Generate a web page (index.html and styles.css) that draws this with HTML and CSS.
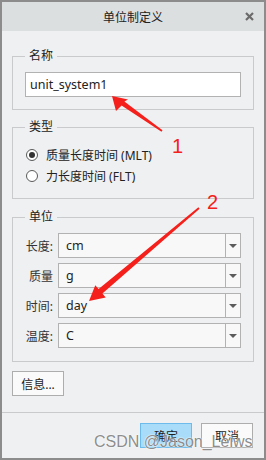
FILE: index.html
```html
<!DOCTYPE html>
<html lang="zh-CN">
<head>
  <meta charset="UTF-8">
  <meta name="viewport" content="width=device-width, initial-scale=1.0">
  <title>单位制定义</title>
  <link rel="stylesheet" href="styles.css">
</head>
<body>
  <div class="window">
    <div class="titlebar">
      <span></span>
      <span class="title">单位制定义</span>
      <span class="close">
        <svg width="9" height="9" viewBox="0 0 9 9">
          <path d="M1 1 L8 8 M8 1 L1 8" stroke="#6b6b6b" stroke-width="2.2" fill="none"/>
        </svg>
      </span>
    </div>

    <div class="content">
      <fieldset class="group name-group">
        <legend>名称</legend>
        <div class="textbox">unit_system1</div>
      </fieldset>

      <fieldset class="group type-group">
        <legend>类型</legend>
        <div class="radio-row"><span class="radio checked"></span>质量长度时间 (MLT)</div>
        <div class="radio-row"><span class="radio"></span>力长度时间 (FLT)</div>
      </fieldset>

      <fieldset class="group unit-group">
        <legend>单位</legend>
        <div class="unit-grid">
          <span class="unit-label">长度:</span>
          <div class="combo"><span class="combo-value">cm</span><span class="combo-arrow"></span></div>
          <span class="unit-label">质量</span>
          <div class="combo"><span class="combo-value">g</span><span class="combo-arrow"></span></div>
          <span class="unit-label">时间:</span>
          <div class="combo"><span class="combo-value">day</span><span class="combo-arrow"></span></div>
          <span class="unit-label">温度:</span>
          <div class="combo"><span class="combo-value">C</span><span class="combo-arrow"></span></div>
        </div>
      </fieldset>

      <button class="btn info-btn">信息...</button>
    </div>

    <div class="footer">
      <button class="btn primary">确定</button>
      <button class="btn">取消</button>
    </div>

    <!-- red annotation arrows drawn over the dialog -->
    <svg class="annotations" width="266" height="460" viewBox="0 0 266 460">
      <polygon fill="#f5201b" points="112,96 128,99.5 124.4,101.5 162.5,130.3 161.5,131.7 121.6,105.6 116,111"/>
      <polygon fill="#f5201b" points="89,301 105.7,297.4 102.4,293.6 199.6,208.8 198.4,207.2 98.6,289 95.3,285.2"/>
      <text x="172" y="153" class="mark">1</text>
      <text x="207" y="209" class="mark">2</text>
    </svg>

    <div class="watermark">CSDN @Jason_Leiws</div>
  </div>
</body>
</html>
```

FILE: styles.css
```css
    body {
      margin: 0;
      background-color: #eff0f1;
      font-family: "Noto Sans", "Noto Sans CJK SC", sans-serif;
      font-size: 12px;
      color: #222;
    }
    .window {
      position: relative;
      width: 266px;
      height: 460px;
      box-sizing: border-box;
      border: 2px solid #8c8c8c;
      background-color: #eff0f1;
      display: flex;
      flex-direction: column;
    }
    .titlebar {
      height: 29px;
      background-color: #dcdfe0;
      display: grid;
      grid-template-columns: 1fr auto 1fr;
      align-items: center;
    }
    .title {
      font-size: 12px;
      color: #222;
    }
    .close {
      justify-self: end;
      padding-right: 10px;
      display: flex;
    }
    .content {
      padding: 16px 10px 0 10px;
    }
    .group {
      margin: 0;
      border: 1px solid #c9cacb;
      padding: 7px 12px 12px 12px;
    }
    .group legend {
      padding: 0 4px;
      line-height: 18px;
    }
    .type-group {
      margin-top: 8px;
      padding-top: 8px;
    }
    .unit-group {
      margin-top: 9px;
      padding-bottom: 13px;
    }
    .textbox {
      height: 25px;
      box-sizing: border-box;
      border: 1px solid #b2b2b2;
      background-color: #fff;
      padding-left: 4px;
      display: flex;
      align-items: center;
      font-size: 12.5px;
    }
    .radio-row {
      height: 21px;
      display: flex;
      align-items: center;
      gap: 8px;
      padding-left: 1px;
    }
    .radio {
      width: 12px;
      height: 12px;
      box-sizing: border-box;
      border: 1px solid #5a5a5a;
      border-radius: 50%;
      background-color: #fff;
      display: flex;
      align-items: center;
      justify-content: center;
    }
    .radio.checked::after {
      content: "";
      width: 6px;
      height: 6px;
      border-radius: 50%;
      background-color: #333;
    }
    .unit-grid {
      display: grid;
      grid-template-columns: 28px 1fr;
      column-gap: 5px;
      row-gap: 5px;
    }
    .unit-label {
      text-align: right;
      align-self: center;
      color: #333;
    }
    .combo {
      height: 25px;
      box-sizing: border-box;
      border: 1px solid #b2b2b2;
      background-color: #f8f8f8;
      display: flex;
    }
    .combo-value {
      flex: 1;
      padding-left: 7px;
      display: flex;
      align-items: center;
      font-size: 12.5px;
    }
    .combo-arrow {
      width: 14px;
      border-left: 1px solid #b2b2b2;
      display: flex;
      align-items: center;
      justify-content: center;
    }
    .combo-arrow::after {
      content: "";
      border-left: 4px solid transparent;
      border-right: 4px solid transparent;
      border-top: 4px solid #5c5c5c;
    }
    .btn {
      height: 25px;
      width: 52px;
      box-sizing: border-box;
      border: 1px solid #adadad;
      background-color: #fafafa;
      font-family: "Noto Sans", "Noto Sans CJK SC", sans-serif;
      font-size: 12px;
      color: #222;
      padding: 0;
    }
    .info-btn {
      margin-top: 9px;
    }
    .footer {
      margin-top: auto;
      border-top: 1px solid #c9cacb;
      padding: 10px 11px 10px 0;
      display: flex;
      justify-content: flex-end;
      gap: 9px;
    }
    .btn.primary {
      background-color: #a8dcf8;
      border-color: #6cbbec;
    }
    .annotations {
      position: absolute;
      left: -2px;
      top: -2px;
    }
    .mark {
      font-family: "Liberation Sans", sans-serif;
      font-size: 20px;
      fill: #f5201b;
    }
    .watermark {
      position: absolute;
      left: 92px;
      top: 431px;
      font-family: "Liberation Sans", sans-serif;
      font-size: 16px;
      line-height: 18px;
      color: rgba(110, 110, 110, 0.8);
      text-shadow: 0 0 2px #fff, 0 0 1px #fff;
      white-space: nowrap;
    }
```
